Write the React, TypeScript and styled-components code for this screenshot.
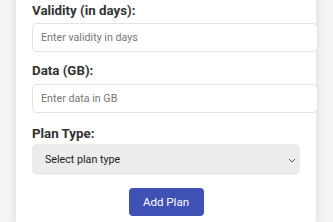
import * as React from "react";
import styled, { createGlobalStyle } from "styled-components";

const GlobalStyle = createGlobalStyle`
  html, body {
    margin: 0;
    padding: 0;
    background: #f4f4f4;
    font-family: Roboto, "Liberation Sans", Arial, sans-serif;
    overflow: hidden;
  }
`;

const Page = styled.div`
  padding: 0 17px 0 16px;
`;

const Card = styled.form`
  margin-top: -13px;
  background: #fff;
  padding: 16px 16px 8px 16px;
  box-shadow: 0 0 10px rgba(0, 0, 0, 0.1);
`;

const FormGroup = styled.div<{ $gap?: number }>`
  margin-bottom: ${(p) => p.$gap ?? 0}px;
`;

const Label = styled.label<{ $space?: number }>`
  display: block;
  font-size: 13.3px;
  line-height: 15px;
  font-weight: 700;
  color: #333;
  margin-bottom: ${(p) => p.$space ?? 5}px;
`;

const Input = styled.input`
  display: block;
  width: 100%;
  height: 27px;
  padding: 0 8px;
  border: 1px solid #e3e3e3;
  border-radius: 5px;
  font-family: inherit;
  font-size: 10.7px;
  color: #333;
  background: #fff;
  outline: none;

  &::placeholder {
    color: #777;
  }
`;

const SelectWrap = styled.div`
  position: relative;
`;

const Select = styled.select`
  display: block;
  width: 100%;
  height: 31px;
  padding: 0 24px 0 12px;
  border: 1px solid #ececec;
  border-radius: 5px;
  background: #ececec;
  font-family: inherit;
  font-size: 10.7px;
  color: #222;
  outline: none;
  appearance: none;
`;

const Chevron = styled.svg`
  position: absolute;
  right: 4px;
  top: 14px;
  pointer-events: none;
`;

const Actions = styled.div`
  display: flex;
  justify-content: center;
  padding-top: 13px;
`;

const Button = styled.button`
  width: 75px;
  height: 28px;
  border: none;
  border-radius: 4px;
  background: #3f51b5;
  color: #fff;
  font-family: inherit;
  font-size: 11.5px;
  cursor: pointer;
`;

export default function App() {
  return (
    <Page>
      <GlobalStyle />
      <Card onSubmit={(e) => e.preventDefault()}>
        <FormGroup $gap={11}>
          <Label htmlFor="validity">Validity (in days):</Label>
          <Input id="validity" type="number" placeholder="Enter validity in days" />
        </FormGroup>
        <FormGroup $gap={13}>
          <Label htmlFor="data" $space={6}>Data (GB):</Label>
          <Input id="data" type="number" placeholder="Enter data in GB" />
        </FormGroup>
        <FormGroup>
          <Label htmlFor="type" $space={3}>Plan Type:</Label>
          <SelectWrap>
            <Select id="type" defaultValue="">
              <option value="" disabled>
                Select plan type
              </option>
              <option value="prepaid">Prepaid</option>
              <option value="postpaid">Postpaid</option>
            </Select>
            <Chevron width="8" height="5" viewBox="0 0 8 5">
              <path d="M1 1l3 3 3-3" fill="none" stroke="#555" strokeWidth="1" />
            </Chevron>
          </SelectWrap>
        </FormGroup>
        <Actions>
          <Button type="submit">Add Plan</Button>
        </Actions>
      </Card>
    </Page>
  );
}
